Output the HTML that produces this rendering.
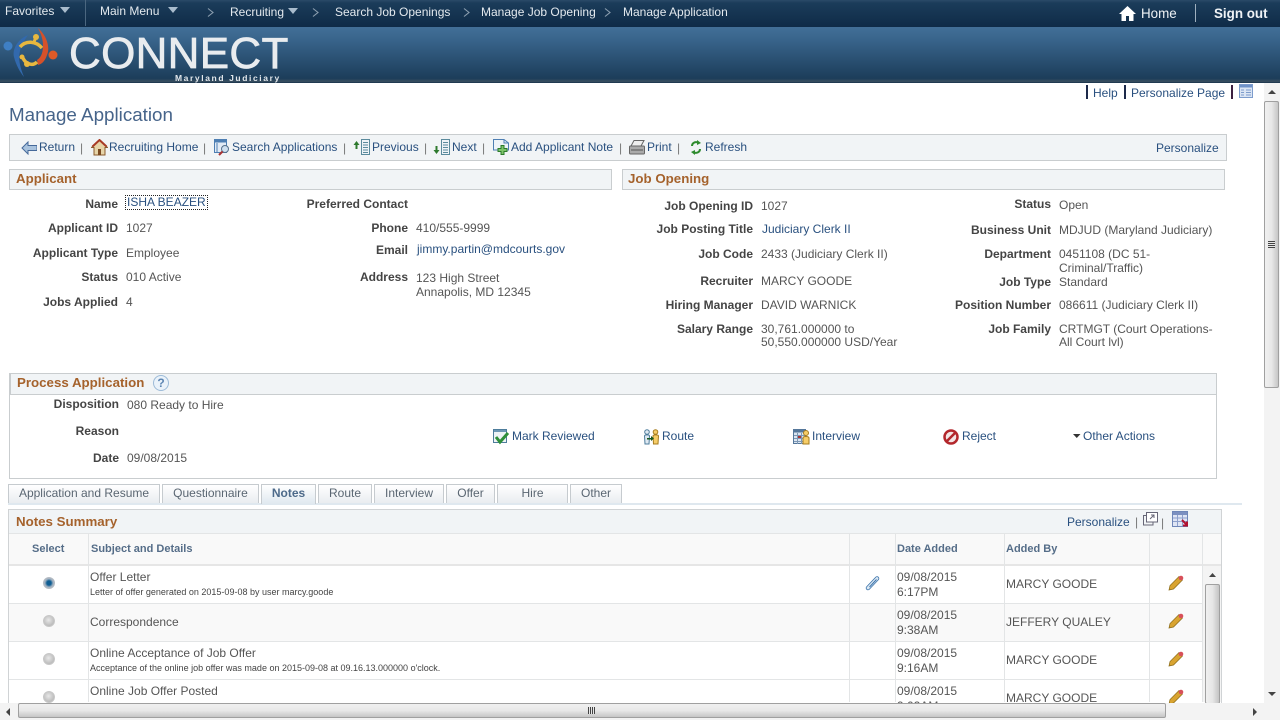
<!DOCTYPE html>
<html><head><meta charset="utf-8"><title>Manage Application</title>
<style>
html,body{margin:0;padding:0;background:#fff;overflow:hidden}
body{width:1280px;height:720px;position:relative;font:12px/14px "Liberation Sans",Arial,sans-serif;color:#555}
div,span.t,a,b.t{position:absolute;white-space:nowrap}
a{color:#29507f;text-decoration:none}
.n{color:#e3e9ee;top:5px}
.l{color:#444;font-weight:bold;text-align:right;width:120px}
.v{color:#555}
.bar{background:#f1f4f6;border:1px solid #c9cdcf;box-sizing:border-box}
.h{color:#a5622c;font-weight:bold;font-size:13.300px}
.sep{color:#777}
.tab{top:484px;height:19px;box-sizing:border-box;border:1px solid #c6cbcf;border-bottom:0;background:linear-gradient(#fff,#e9edf0);text-align:center;color:#5a6672;line-height:16px}
.ln{background:#e3e5e6}
.r{width:12px;height:12px;border-radius:50%;left:43px;background:radial-gradient(circle at 45% 40%,#e8e8e8,#a9a9a9);border:1px solid #c8c8c8;box-sizing:border-box}
.ch{color:#556d88;font-weight:bold;font-size:11px}
.s{font-size:9px;line-height:11px;color:#444}
svg{position:absolute}
</style></head><body>

<!-- top nav -->
<div style="left:0;top:0;width:1280px;height:27px;background:linear-gradient(#2b4a68 0,#1b3c5a 3px,#0f2b47 100%)"></div>
<div style="left:85px;top:0;width:1px;height:26px;background:#4b6780"></div>
<span class="t n" style="left:5px;top:4px">Favorites</span>
<svg style="left:60px;top:7px" width="10" height="6"><path d="M0 0H10L5 6Z" fill="#a9bccd"/></svg>
<span class="t n" style="left:100px;top:4px">Main Menu</span>
<svg style="left:168px;top:7px" width="10" height="6"><path d="M0 0H10L5 6Z" fill="#a9bccd"/></svg>
<svg style="left:207px;top:8px" width="7" height="10"><path d="M1 .5L6 4.500L1 8.500" fill="none" stroke="#8c9fb0" stroke-width="1.100"/></svg>
<span class="t n" style="left:230px">Recruiting</span>
<svg style="left:288px;top:8px" width="10" height="6"><path d="M0 0H10L5 6Z" fill="#a9bccd"/></svg>
<svg style="left:312px;top:8px" width="7" height="10"><path d="M1 .5L6 4.500L1 8.500" fill="none" stroke="#8c9fb0" stroke-width="1.100"/></svg>
<span class="t n" style="left:335px">Search Job Openings</span>
<svg style="left:463px;top:8px" width="7" height="10"><path d="M1 .5L6 4.500L1 8.500" fill="none" stroke="#8c9fb0" stroke-width="1.100"/></svg>
<span class="t n" style="left:481px">Manage Job Opening</span>
<svg style="left:604px;top:8px" width="7" height="10"><path d="M1 .5L6 4.500L1 8.500" fill="none" stroke="#8c9fb0" stroke-width="1.100"/></svg>
<span class="t n" style="left:623px">Manage Application</span>
<svg style="left:1119px;top:6px" width="18" height="16" viewBox="0 0 18 16"><path d="M8.500 0L0 8H2.500V15H7V10H10V15H14.500V8H17Z" fill="#fff"/></svg>
<span class="t" style="left:1141px;top:7px;color:#eef2f5;font-size:13.400px">Home</span>
<div style="left:1195px;top:4px;width:1px;height:18px;background:#9fb0bf"></div>
<b class="t" style="left:1214px;top:7px;color:#f0f3f6;font-size:13.400px">Sign out</b>

<!-- banner -->
<div style="left:0;top:27px;width:1280px;height:56px;background:linear-gradient(#426f97 0,#39658c 12px,#1c3d5a 92%,#3a4f60 97%,#16324b 100%)"></div>
<svg style="left:0;top:27px" width="64" height="56" viewBox="0 0 64 56">
<circle cx="8" cy="19" r="4.500" fill="#3f7fc4"/>
<path d="M28 8C18 12 12 22 14 30C16 38 20 45 24 50C20 40 18 32 20 24C21 18 24 14 28 8Z" fill="#3269ad"/>
<path d="M20 20C26 13 36 14 42 21" fill="none" stroke="#e8b83f" stroke-width="3.500"/>
<circle cx="36" cy="10" r="3" fill="#e8b83f"/><path d="M36 10L34 15" stroke="#e8b83f" stroke-width="3"/>
<path d="M38 1C48 10 50 22 47 28C45 34 42 37 38 38L37 33C42 30 43 24 43 18C43 12 41 7 38 1Z" fill="#d5512a"/>
<circle cx="53" cy="28" r="4.500" fill="#dd5a28"/>
<path d="M23 31C25 36 32 40 37 35" fill="none" stroke="#e8b83f" stroke-width="3.500"/>
<circle cx="27" cy="37" r="3" fill="#e8b83f"/>
<circle cx="22" cy="30" r="2.500" fill="#e8b83f"/>
</svg>
<span class="t" style="left:69px;top:30px;font-size:44px;line-height:48px;color:#e9ecef;letter-spacing:.3px;-webkit-text-stroke:.7px #e9ecef">CONNECT</span>
<span class="t" style="left:175px;top:73px;font-size:8.500px;line-height:10px;color:#e3e8ec;letter-spacing:1.600px;font-weight:bold">Maryland Judiciary</span>

<!-- top-right links -->
<div style="left:1086px;top:85px;width:2px;height:14px;background:#1d2a4a"></div>
<a style="left:1093px;top:86px">Help</a>
<div style="left:1124px;top:85px;width:2px;height:14px;background:#1d2a4a"></div>
<a style="left:1131px;top:86px">Personalize Page</a>
<div style="left:1231px;top:85px;width:2px;height:14px;background:#3c2040"></div>
<svg style="left:1239px;top:84px" width="14" height="14" viewBox="0 0 14 14"><rect x=".5" y=".5" width="13" height="13" fill="#dbe5f3" stroke="#7d9ccc"/><rect x="1" y="1" width="12" height="2.500" fill="#6f92c8"/><path d="M2 6h3M2 8.500h3M2 11h3M7 6h5M7 8.500h5M7 11h5" stroke="#7d9ccc"/></svg>

<span class="t" style="left:9px;top:103px;font-size:18.800px;line-height:24px;color:#46648a">Manage Application</span>

<!-- toolbar -->
<div class="bar" style="left:9px;top:134px;width:1218px;height:27px"></div>
<svg style="left:21px;top:141px" width="16" height="14" viewBox="0 0 16 14"><path d="M7 1L1 7L7 13V9.500H16V4.500H7Z" fill="#a9c3de" stroke="#45699a"/></svg>
<a style="left:39px;top:140px">Return</a><span class="t sep" style="left:80px;top:141px">|</span>
<svg style="left:91px;top:139px" width="17" height="17" viewBox="0 0 17 17"><path d="M8.500 1L.5 8.500H3V16H14V8.500H16.500Z" fill="#e6d4a8" stroke="#8a5a2c"/><path d="M1.500 7.500L8.500 1L15.500 7.500" fill="none" stroke="#a83a25" stroke-width="2"/><rect x="7" y="10" width="3" height="6" fill="#7a4a20"/></svg>
<a style="left:109px;top:140px">Recruiting Home</a><span class="t sep" style="left:203px;top:141px">|</span>
<svg style="left:214px;top:139px" width="17" height="17" viewBox="0 0 17 17"><rect x=".5" y=".5" width="12" height="13" fill="#e2ebf5" stroke="#4e7fb3"/><rect x="1" y="1" width="11" height="2.500" fill="#4e7fb3"/><path d="M3 4V13" stroke="#4e7fb3"/><circle cx="11" cy="10" r="3.500" fill="#cfe0ef" stroke="#55708c"/><path d="M8.500 12.500L5 16" stroke="#a33" stroke-width="2"/></svg>
<a style="left:232px;top:140px">Search Applications</a><span class="t sep" style="left:343px;top:141px">|</span>
<svg style="left:353px;top:139px" width="18" height="16" viewBox="0 0 18 16"><path d="M3.500 2L.5 6H2.500V10H4.500V6H6.500Z" fill="#2e7a2e"/><rect x="8.500" y=".5" width="8" height="15" fill="#eef3f7" stroke="#5a8a9c"/><path d="M10 3.500h5M10 6h5M10 8.500h5M10 11h5M10 13.500h5" stroke="#5a8a9c"/></svg>
<a style="left:372px;top:140px">Previous</a><span class="t sep" style="left:424px;top:141px">|</span>
<svg style="left:433px;top:139px" width="18" height="16" viewBox="0 0 18 16"><path d="M3.500 15L.5 11H2.500V7H4.500V11H6.500Z" fill="#2e7a2e"/><rect x="8.500" y=".5" width="8" height="15" fill="#eef3f7" stroke="#5a8a9c"/><path d="M10 3.500h5M10 6h5M10 8.500h5M10 11h5M10 13.500h5" stroke="#5a8a9c"/></svg>
<a style="left:452px;top:140px">Next</a><span class="t sep" style="left:482px;top:141px">|</span>
<svg style="left:493px;top:139px" width="17" height="16" viewBox="0 0 17 16"><path d="M.5.500H11L15.500 4V11H.5Z" fill="#eef3f8" stroke="#4e7fb3"/><path d="M11 .5V4H15.500" fill="none" stroke="#4e7fb3"/><path d="M5 9.500H8V6.500H11V9.500H14V12.500H11V15.500H8V12.500H5Z" fill="#7ec46a" stroke="#2b7a2b"/></svg>
<a style="left:511px;top:140px">Add Applicant Note</a><span class="t sep" style="left:619px;top:141px">|</span>
<svg style="left:629px;top:140px" width="17" height="15" viewBox="0 0 17 15"><path d="M5 .5H15L12 6H2Z" fill="#eee" stroke="#666"/><rect x=".5" y="6" width="15" height="8" rx="1" fill="#aaa" stroke="#666"/><path d="M2 10H14" stroke="#555"/></svg>
<a style="left:647px;top:140px">Print</a><span class="t sep" style="left:677px;top:141px">|</span>
<svg style="left:689px;top:140px" width="14" height="15" viewBox="0 0 14 15"><path d="M3 6C3 3 6 1.500 9 2.500" fill="none" stroke="#2e8b2e" stroke-width="2"/><path d="M8 0L12 3L8 5Z" fill="#2e8b2e"/><path d="M11 9C11 12 8 13.500 5 12.500" fill="none" stroke="#2e8b2e" stroke-width="2"/><path d="M6 15L2 12L6 10Z" fill="#2e8b2e"/></svg>
<a style="left:705px;top:140px">Refresh</a>
<a style="left:1156px;top:141px">Personalize</a>

<!-- Applicant -->
<div class="bar" style="left:9px;top:169px;width:603px;height:21px"></div>
<span class="t h" style="left:16px;top:172px">Applicant</span>
<span class="t l" style="left:-2px;top:197px">Name</span>
<a style="left:126px;top:196px;outline:1px dotted #222;padding:0 1px;line-height:13px">ISHA BEAZER</a>
<span class="t l" style="left:-2px;top:221px">Applicant ID</span><span class="t v" style="left:126px;top:221px">1027</span>
<span class="t l" style="left:-2px;top:246px">Applicant Type</span><span class="t v" style="left:126px;top:246px">Employee</span>
<span class="t l" style="left:-2px;top:270px">Status</span><span class="t v" style="left:126px;top:270px">010 Active</span>
<span class="t l" style="left:-2px;top:295px">Jobs Applied</span><span class="t v" style="left:126px;top:295px">4</span>
<span class="t l" style="left:288px;top:197px">Preferred Contact</span>
<span class="t l" style="left:288px;top:221px">Phone</span><span class="t v" style="left:416px;top:221px">410/555-9999</span>
<span class="t l" style="left:288px;top:243px">Email</span><a style="left:417px;top:242px">jimmy.partin@mdcourts.gov</a>
<span class="t l" style="left:288px;top:270px">Address</span><span class="t v" style="left:416px;top:271px">123 High Street</span><span class="t v" style="left:416px;top:285px">Annapolis, MD 12345</span>

<!-- Job Opening -->
<div class="bar" style="left:622px;top:169px;width:603px;height:21px"></div>
<span class="t h" style="left:628px;top:172px">Job Opening</span>
<span class="t l" style="left:633px;top:199px">Job Opening ID</span><span class="t v" style="left:761px;top:199px">1027</span>
<span class="t l" style="left:633px;top:222px">Job Posting Title</span><a style="left:762px;top:222px">Judiciary Clerk II</a>
<span class="t l" style="left:633px;top:247px">Job Code</span><span class="t v" style="left:761px;top:247px">2433 (Judiciary Clerk II)</span>
<span class="t l" style="left:633px;top:274px">Recruiter</span><span class="t v" style="left:761px;top:274px">MARCY GOODE</span>
<span class="t l" style="left:633px;top:298px">Hiring Manager</span><span class="t v" style="left:761px;top:298px">DAVID WARNICK</span>
<span class="t l" style="left:633px;top:322px">Salary Range</span><span class="t v" style="left:761px;top:322px">30,761.000000 to</span><span class="t v" style="left:761px;top:335px">50,550.000000 USD/Year</span>
<span class="t l" style="left:931px;top:197px">Status</span><span class="t v" style="left:1059px;top:198px">Open</span>
<span class="t l" style="left:931px;top:223px">Business Unit</span><span class="t v" style="left:1059px;top:223px">MDJUD (Maryland Judiciary)</span>
<span class="t l" style="left:931px;top:247px">Department</span><span class="t v" style="left:1059px;top:247px">0451108 (DC 51-</span><span class="t v" style="left:1059px;top:261px">Criminal/Traffic)</span>
<span class="t l" style="left:931px;top:275px">Job Type</span><span class="t v" style="left:1059px;top:275px">Standard</span>
<span class="t l" style="left:931px;top:298px">Position Number</span><span class="t v" style="left:1059px;top:298px">086611 (Judiciary Clerk II)</span>
<span class="t l" style="left:931px;top:322px">Job Family</span><span class="t v" style="left:1059px;top:322px">CRTMGT (Court Operations-</span><span class="t v" style="left:1059px;top:335px">All Court lvl)</span>

<!-- Process Application -->
<div style="left:9px;top:373px;width:1208px;height:106px;border:1px solid #c9cdcf;box-sizing:border-box"></div>
<div class="bar" style="left:10px;top:373px;width:1207px;height:22px"></div>
<span class="t h" style="left:17px;top:376px">Process Application</span>
<div style="left:153px;top:375px;width:16px;height:16px;border-radius:50%;border:1px solid #9dbbd8;box-sizing:border-box;background:#eaf2fa;color:#5d86b3;font-weight:bold;text-align:center;line-height:14px;font-size:12px">?</div>
<span class="t l" style="left:-1px;top:397px">Disposition</span><span class="t v" style="left:127px;top:398px">080 Ready to Hire</span>
<span class="t l" style="left:-1px;top:424px">Reason</span>
<span class="t l" style="left:-1px;top:451px">Date</span><span class="t v" style="left:127px;top:451px">09/08/2015</span>

<svg style="left:493px;top:429px" width="17" height="16" viewBox="0 0 17 16"><rect x=".5" y=".5" width="13" height="13" fill="#eef3f6" stroke="#4e7d9c"/><rect x="1" y="1" width="12" height="2" fill="#6d98b5"/><path d="M3 8L7 13L15 4" fill="none" stroke="#2f8f3a" stroke-width="3"/></svg>
<a style="left:512px;top:429px">Mark Reviewed</a>
<svg style="left:643px;top:429px" width="17" height="16" viewBox="0 0 17 16"><circle cx="4" cy="3" r="2.300" fill="#dfe9f2" stroke="#4e7d9c"/><path d="M1.500 7C1.500 5.500 6.500 5.500 6.500 7L6 15H2Z" fill="#dfe9f2" stroke="#4e7d9c"/><circle cx="12.500" cy="3" r="2.300" fill="#f6cd68" stroke="#a67c1e"/><path d="M10 7C10 5.500 15.500 5.500 15.500 7L15 15H10.500Z" fill="#f6cd68" stroke="#a67c1e"/><path d="M4 9H8V7L11 9.500L8 12V10.500H4Z" fill="#17571e"/></svg>
<a style="left:662px;top:429px">Route</a>
<svg style="left:793px;top:429px" width="17" height="16" viewBox="0 0 17 16"><rect x=".5" y=".5" width="12" height="14" fill="#dbe5f0" stroke="#55779a"/><rect x="1" y="1" width="11" height="2.500" fill="#55779a"/><path d="M1 6.500H12M1 9.500H12M1 12.500H12M4.500 4V15M8.500 4V15" stroke="#7d98b5"/><rect x="5" y="7" width="3" height="2" fill="#a33"/><circle cx="13" cy="4" r="2.500" fill="#f6cd68" stroke="#a67c1e"/><path d="M10 15V9C10 7 16 7 16 9V15Z" fill="#f6cd68" stroke="#a67c1e"/></svg>
<a style="left:812px;top:429px">Interview</a>
<svg style="left:943px;top:429px" width="16" height="16" viewBox="0 0 16 16"><circle cx="8" cy="8" r="6.500" fill="#f3e5e5" stroke="#b3272c" stroke-width="2.500"/><path d="M3.500 12.500L12.500 3.500" stroke="#b3272c" stroke-width="2.500"/></svg>
<a style="left:962px;top:429px">Reject</a>
<svg style="left:1073px;top:434px" width="8" height="5"><path d="M0 0H7.500L3.750 4Z" fill="#333"/></svg>
<a style="left:1083px;top:429px">Other Actions</a>

<!-- tabs -->
<div style="left:8px;top:503px;width:1234px;height:2px;background:#dfe8ef"></div>
<div class="tab" style="left:8px;width:152px">Application and Resume</div>
<div class="tab" style="left:162px;width:97px">Questionnaire</div>
<div class="tab" style="left:261px;width:55px;font-weight:bold;color:#4d6a8a;background:linear-gradient(#fff,#dfe8ef);height:20px">Notes</div>
<div class="tab" style="left:318px;width:54px">Route</div>
<div class="tab" style="left:374px;width:70px">Interview</div>
<div class="tab" style="left:446px;width:49px">Offer</div>
<div class="tab" style="left:497px;width:71px">Hire</div>
<div class="tab" style="left:570px;width:52px">Other</div>

<!-- Notes grid -->
<div style="left:8px;top:509px;width:1214px;height:200px;border:1px solid #d0d3d5;border-bottom:0;box-sizing:border-box"></div>
<div class="bar" style="left:9px;top:510px;width:1212px;height:24px;border-width:0 0 1px;border-color:#e3e5e6"></div>
<span class="t h" style="left:16px;top:515px">Notes Summary</span>
<a style="left:1067px;top:515px">Personalize</a><span class="t sep" style="left:1135px;top:515px">|</span>
<svg style="left:1143px;top:512px" width="15" height="14" viewBox="0 0 15 14"><path d="M3.500 3.500H.5V13H10V10" fill="none" stroke="#667"/><rect x="3.500" y=".5" width="11" height="9.500" fill="#fff" stroke="#667"/><path d="M7 7L11 3M8 3H11V6" fill="none" stroke="#667"/></svg>
<span class="t sep" style="left:1161px;top:516px">|</span>
<svg style="left:1172px;top:511px" width="17" height="16" viewBox="0 0 17 16"><rect x=".5" y=".5" width="15" height="15" fill="#dfe5f4" stroke="#6f86b8"/><rect x="1" y="1" width="14" height="3" fill="#7c90c0"/><path d="M1 7H15M1 10.500H15M5.500 4V15M10.500 4V15" stroke="#8da0cc"/><path d="M10 9L15 14M15 10.500V14.500H11" fill="none" stroke="#b01030" stroke-width="2"/></svg>

<div style="left:9px;top:534px;width:1212px;height:30px;background:#f9f9f9"></div>
<div style="left:9px;top:564px;width:1212px;height:2px;background:#e6e6e6"></div>
<div style="left:9px;top:604px;width:1193px;height:38px;background:#f9f9f9"></div>
<span class="t ch" style="left:32px;top:542px">Select</span>
<span class="t ch" style="left:91px;top:542px">Subject and Details</span>
<span class="t ch" style="left:897px;top:542px">Date Added</span>
<span class="t ch" style="left:1006px;top:542px">Added By</span>

<div class="ln" style="left:88px;top:534px;width:1px;height:168px"></div>
<div class="ln" style="left:849px;top:534px;width:1px;height:168px"></div>
<div class="ln" style="left:895px;top:534px;width:1px;height:168px"></div>
<div class="ln" style="left:1004px;top:534px;width:1px;height:168px"></div>
<div class="ln" style="left:1149px;top:534px;width:1px;height:168px"></div>
<div class="ln" style="left:1202px;top:534px;width:1px;height:168px"></div>
<div class="ln" style="left:9px;top:603px;width:1193px;height:1px"></div>
<div class="ln" style="left:9px;top:641px;width:1193px;height:1px"></div>
<div class="ln" style="left:9px;top:679px;width:1193px;height:1px"></div>

<div class="r" style="top:577px;background:radial-gradient(circle,#0f5e93 0,#0f5e93 30%,#a9b6c4 60%,#8e99a6);border-color:#b5bcc4"></div>
<div class="r" style="top:615px"></div><div class="r" style="top:653px"></div><div class="r" style="top:691px"></div>

<span class="t" style="left:90px;top:570px">Offer Letter</span>
<span class="t s" style="left:90px;top:587px">Letter of offer generated on 2015-09-08 by user marcy.goode</span>
<span class="t" style="left:90px;top:615px">Correspondence</span>
<span class="t" style="left:90px;top:646px">Online Acceptance of Job Offer</span>
<span class="t s" style="left:90px;top:663px">Acceptance of the online job offer was made on 2015-09-08 at 09.16.13.000000 o'clock.</span>
<span class="t" style="left:90px;top:684px">Online Job Offer Posted</span>

<svg style="left:865px;top:575px" width="16" height="16" viewBox="0 0 16 16"><path d="M3 13L12 3.500" fill="none" stroke="#3c74ab" stroke-width="4.500" stroke-linecap="round"/><path d="M3 13L12 3.500" fill="none" stroke="#dce8f3" stroke-width="2.800" stroke-linecap="round"/><path d="M4.500 12L11.500 4.500" stroke="#3c74ab" stroke-width="1"/></svg>

<span class="t" style="left:897px;top:570px">09/08/2015</span><span class="t" style="left:897px;top:585px">6:17PM</span>
<span class="t" style="left:897px;top:608px">09/08/2015</span><span class="t" style="left:897px;top:623px">9:38AM</span>
<span class="t" style="left:897px;top:646px">09/08/2015</span><span class="t" style="left:897px;top:661px">9:16AM</span>
<span class="t" style="left:897px;top:684px">09/08/2015</span><span class="t" style="left:897px;top:699px">9:02AM</span>
<span class="t" style="left:1006px;top:577px">MARCY GOODE</span>
<span class="t" style="left:1006px;top:615px">JEFFERY QUALEY</span>
<span class="t" style="left:1006px;top:653px">MARCY GOODE</span>
<span class="t" style="left:1006px;top:691px">MARCY GOODE</span>

<svg style="left:1168px;top:575px" width="16" height="16" viewBox="0 0 16 16"><path d="M1 15L2 10.500L11 1.500L14.500 5L5.500 14Z" fill="#d9a431" stroke="#8a6a18" stroke-width=".7"/><circle cx="13" cy="3" r="2.300" fill="#d8505a"/></svg>
<svg style="left:1168px;top:613px" width="16" height="16" viewBox="0 0 16 16"><path d="M1 15L2 10.500L11 1.500L14.500 5L5.500 14Z" fill="#d9a431" stroke="#8a6a18" stroke-width=".7"/><circle cx="13" cy="3" r="2.300" fill="#d8505a"/></svg>
<svg style="left:1168px;top:651px" width="16" height="16" viewBox="0 0 16 16"><path d="M1 15L2 10.500L11 1.500L14.500 5L5.500 14Z" fill="#d9a431" stroke="#8a6a18" stroke-width=".7"/><circle cx="13" cy="3" r="2.300" fill="#d8505a"/></svg>
<svg style="left:1168px;top:689px" width="16" height="16" viewBox="0 0 16 16"><path d="M1 15L2 10.500L11 1.500L14.500 5L5.500 14Z" fill="#d9a431" stroke="#8a6a18" stroke-width=".7"/><circle cx="13" cy="3" r="2.300" fill="#d8505a"/></svg>

<!-- inner scrollbar -->
<div style="left:1203px;top:566px;width:18px;height:136px;background:#f4f4f4"></div>
<svg style="left:1209px;top:573px" width="7" height="5"><path d="M0 4H7L3.500 0Z" fill="#444"/></svg>
<div style="left:1205px;top:584px;width:15px;height:120px;box-sizing:border-box;border:1px solid #a0a0a0;border-radius:2px;background:linear-gradient(90deg,#f0f0f0,#e6e6e6 50%,#c4c4c4)"></div>

<!-- outer scrollbars -->
<div style="left:1264px;top:83px;width:16px;height:637px;background:#f3f3f3"></div>
<svg style="left:1268px;top:90px" width="8" height="5"><path d="M0 4H8L4 0Z" fill="#444"/></svg>
<svg style="left:1268px;top:692px" width="8" height="5"><path d="M0 0H8L4 4Z" fill="#444"/></svg>
<div style="left:1264px;top:101px;width:15px;height:287px;box-sizing:border-box;border:1px solid #a0a0a0;border-radius:2px;background:linear-gradient(90deg,#f0f0f0,#e8e8e8 50%,#c6c6c6)"></div>
<div style="left:1268px;top:241px;width:7px;height:7px;background:repeating-linear-gradient(#444 0,#444 1px,#e8e8e8 1px,#e8e8e8 2px)"></div>
<div style="left:0;top:703px;width:1264px;height:17px;background:#f3f3f3"></div>
<svg style="left:6px;top:708px" width="5" height="8"><path d="M4 0V8L0 4Z" fill="#444"/></svg>
<svg style="left:1253px;top:708px" width="5" height="8"><path d="M0 0V8L4 4Z" fill="#444"/></svg>
<div style="left:18px;top:703px;width:1148px;height:15px;box-sizing:border-box;border:1px solid #a0a0a0;border-radius:2px;background:linear-gradient(#f0f0f0,#e8e8e8 50%,#c6c6c6)"></div>
<div style="left:588px;top:707px;width:7px;height:7px;background:repeating-linear-gradient(90deg,#444 0,#444 1px,#e8e8e8 1px,#e8e8e8 2px)"></div>
</body></html>
